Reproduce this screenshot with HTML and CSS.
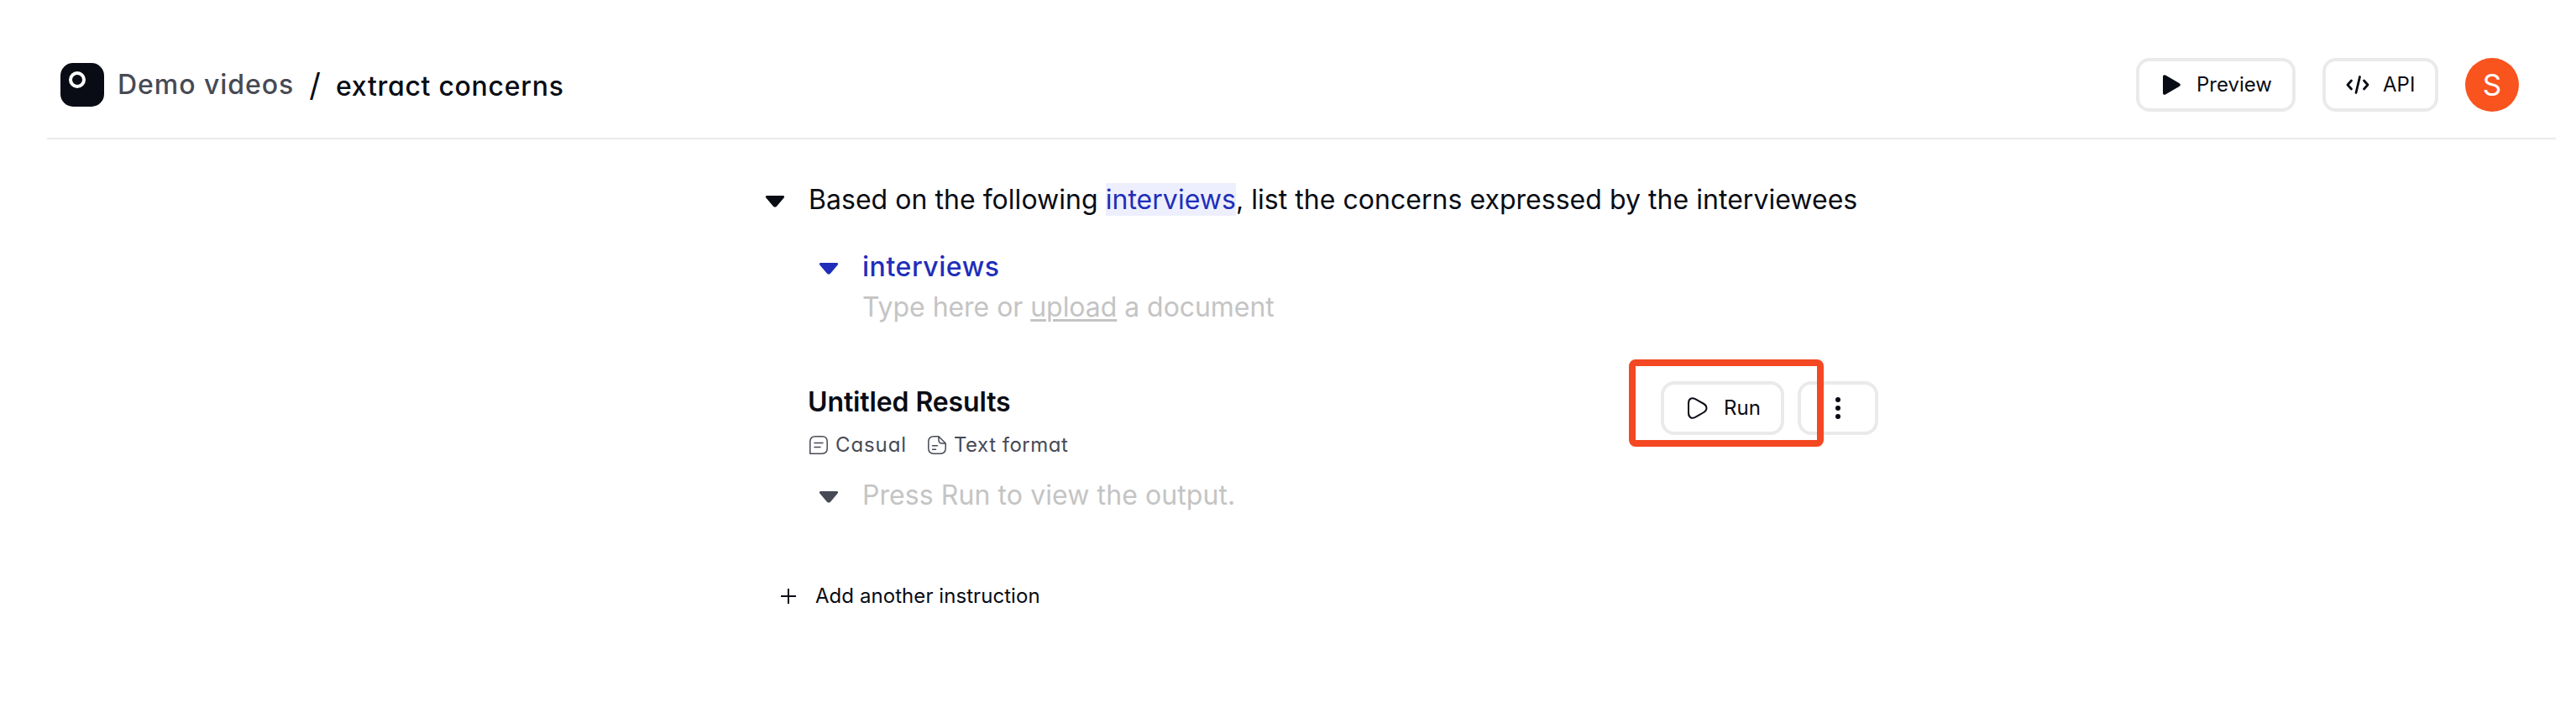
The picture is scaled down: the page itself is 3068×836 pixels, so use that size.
FILE: index.html
```html
<!DOCTYPE html>
<html lang="en">
<head>
<meta charset="utf-8">
<title>extract concerns</title>
<link rel="stylesheet" href="styles.css">
</head>
<body>
<header class="topbar">
  <nav class="crumbs">
    <span class="logo"><span class="logo-ring"></span></span>
    <span class="crumb-parent">Demo videos</span>
    <span class="crumb-sep">/</span>
    <span class="crumb-current">extract concerns</span>
  </nav>
  <div class="actions">
    <button class="btn btn-preview">
      <svg class="icon-play" width="24" height="26" viewBox="0 0 24 26"><path d="M2 3.500C2 1.200 3.500.6 5.500 1.700L21.400 11c2 1.200 2 2.800 0 4L5.500 24.300C3.500 25.400 2 24.800 2 22.500z" fill="#090c14"/></svg>
      <span>Preview</span>
    </button>
    <button class="btn btn-api">
      <svg class="icon-code" width="28" height="24" viewBox="0 0 28 24" fill="none" stroke="#090c14" stroke-width="2.800" stroke-linecap="round" stroke-linejoin="round"><path d="M6.500 7 2 12l4.500 5M21.500 7l4.500 5-4.500 5M16.500 2.500 12 21.500"/></svg>
      <span>API</span>
    </button>
    <span class="avatar">S</span>
  </div>
</header>
<main class="editor">
  <section class="row instruction">
    <svg class="caret" width="24" height="16" viewBox="0 0 24 16"><path d="M2.500 1h19c1.800 0 2.200 1.500 1 2.800l-8.300 9.600c-1.400 1.600-3 1.600-4.400 0L1.500 3.800C.3 2.500.7 1 2.500 1z" fill="#090c14"/></svg>
    <p class="prompt">Based on the following <span class="tag">interviews</span>, list the concerns expressed by the interviewees</p>
  </section>
  <section class="row variable">
    <svg class="caret" width="24" height="16" viewBox="0 0 24 16"><path d="M2.500 1h19c1.800 0 2.200 1.500 1 2.800l-8.300 9.600c-1.400 1.600-3 1.600-4.400 0L1.500 3.800C.3 2.500.7 1 2.500 1z" fill="#1f2eba"/></svg>
    <div>
      <h2 class="var-name">interviews</h2>
      <p class="placeholder var-input">Type here or <span class="upload">upload</span> a document</p>
    </div>
  </section>
  <section class="results">
    <div class="results-head">
      <div>
        <h2 class="results-title">Untitled Results</h2>
        <div class="options">
          <span class="option casual">
            <svg width="22" height="22" viewBox="0 0 22 22" fill="none" stroke="#474a54" stroke-width="1.500" stroke-linecap="round" stroke-linejoin="round"><path d="M.8 21.200V7C.8 3 3 .8 7 .8h8c4 0 6.200 2.200 6.200 6.200v8c0 4-2.200 6.200-6.200 6.200zM6 8.500h10M6 13.500h7"/></svg>
            <span>Casual</span>
          </span>
          <span class="option format">
            <svg width="22" height="22" viewBox="0 0 22 22" fill="none" stroke="#474a54" stroke-width="1.500" stroke-linecap="round" stroke-linejoin="round"><path d="M21.200 9v6c0 4-2.200 6.200-6.200 6.200H7c-4 0-6.200-2.200-6.200-6.200V7C.8 3 3 .8 7 .8h6zM13 .8V5c0 3 1 4 4 4h4.200L13 .8M5.500 11.800h6M5.500 16.200h4"/></svg>
            <span>Text format</span>
          </span>
        </div>
      </div>
      <div class="run-group">
        <button class="btn btn-run">
          <svg width="26" height="28" viewBox="0 0 26 28" fill="none" stroke="#090c14" stroke-width="2" stroke-linejoin="round"><path d="M2 14V8.500C2 3 5.500.8 10 3.200l4.800 2.700 4.700 2.600c5.300 3 5.300 8 0 11l-4.700 2.600L10 24.800C5.500 27.200 2 25 2 19.500z"/></svg>
          <span>Run</span>
        </button>
        <button class="btn btn-more" aria-label="More">
          <svg width="6" height="26" viewBox="0 0 6 26" fill="#090c14"><circle cx="3" cy="3" r="3"/><circle cx="3" cy="13" r="3"/><circle cx="3" cy="23" r="3"/></svg>
        </button>
        <span class="highlight"></span>
      </div>
    </div>
    <div class="row output">
      <svg class="caret" width="24" height="16" viewBox="0 0 24 16"><path d="M2.500 1h19c1.800 0 2.200 1.500 1 2.800l-8.300 9.600c-1.400 1.600-3 1.600-4.400 0L1.500 3.800C.3 2.500.7 1 2.500 1z" fill="#474a54"/></svg>
      <p class="placeholder">Press Run to view the output.</p>
    </div>
  </section>
  <div class="add">
    <svg width="18" height="18" viewBox="0 0 18 18" stroke="#090c14" stroke-width="2"><path d="M9 0v18M0 9h18"/></svg>
    <span>Add another instruction</span>
  </div>
</main>
</body>
</html>
```
FILE: styles.css
```css
* { box-sizing: border-box; margin: 0; padding: 0; }
body {
  width: 3068px;
  height: 836px;
  overflow: hidden;
  background: #fff;
  color: #090c14;
  font: 400 32px/40px Inter, "Liberation Sans", sans-serif;
}
svg { display: block; flex: none; }
p, h2, span { white-space: nowrap; }

.topbar {
  display: flex;
  justify-content: space-between;
  height: 166px;
  margin: 0 24px 0 56px;
  padding: 69px 44px 31px 16px;
  border-bottom: 2px solid #eaeaea;
}
.crumbs, .actions { display: flex; align-items: center; height: 64px; }
.crumbs { font-size: 32px; font-weight: 500; font-feature-settings: "cv11"; }
.logo { width: 52px; height: 52px; padding: 10px; border-radius: 15px; background: #090c14; }
.logo-ring { display: block; width: 20px; height: 20px; border: 4px solid #fff; border-radius: 50%; }
.crumb-parent { width: 210px; margin-left: 16px; color: #474a54; letter-spacing: 0.95px; }
.crumb-sep { width: 50px; text-align: center; font-size: 38px; font-weight: 400; }
.crumb-current { padding-top: 4px; letter-spacing: 0.7px; }

.btn {
  display: flex;
  align-items: center;
  height: 64px;
  border: 4px solid #eaeaea;
  border-radius: 16px;
  background: #fff;
  color: #090c14;
  font: 400 24px/30px Inter, "Liberation Sans", sans-serif;
}
.btn-preview { width: 190px; padding-left: 26px; gap: 18px; }
.btn-api { width: 138px; margin-left: 32px; padding-left: 24px; gap: 16px; }
.avatar {
  width: 64px;
  height: 64px;
  margin-left: 32px;
  border-radius: 50%;
  background: #f9531e;
  color: #fff;
  font: 400 35px/64px Inter, "Liberation Sans", sans-serif;
  text-align: center;
}

.editor { width: 1325px; margin-left: 912px; padding-top: 52px; }
.row { display: flex; align-items: flex-start; }
.caret { margin-top: 14px; }
.instruction .caret { margin-left: -1px; }
.prompt { margin-left: 28px; letter-spacing: 0.035px; }
.tag { background: #eeeffe; color: #1f2eba; }
.variable { margin: 40px 0 0 63px; gap: 28px; }
.var-name { color: #1f2eba; font-size: 32px; font-weight: 500; letter-spacing: 0.55px; }
.placeholder { color: #c4c4c4; }
.var-input { margin-top: 8px; letter-spacing: -0.05px; }
.upload { text-decoration: underline; text-decoration-thickness: 3px; text-underline-offset: 3px; }

.results { margin: 69px 0 0 52px; }
.results-head { display: flex; justify-content: space-between; }
.results-title { margin: 4px 0 0 -2px; font-size: 32px; font-weight: 600; letter-spacing: -0.12px; }
.options {
  display: flex;
  gap: 26px;
  margin-top: 19px;
  color: #474a54;
  font-size: 24px;
  line-height: 24px;
  font-feature-settings: "cv11";
}
.option { display: flex; align-items: center; gap: 9px; }
.casual { width: 115px; letter-spacing: 0.9px; }
.format { letter-spacing: 0.5px; }
.run-group { position: relative; display: flex; gap: 16px; height: 64px; margin-top: -1px; }
.btn-run { width: 147px; padding-left: 27px; gap: 18px; }
.btn-more { width: 96px; padding-left: 41px; }
.highlight {
  position: absolute;
  left: -38px;
  top: -26px;
  width: 232px;
  height: 104px;
  border: 8px solid #f44822;
  border-radius: 8px;
}
.output { margin: 28px 0 0 11px; gap: 28px; }
.output .placeholder { letter-spacing: 0.08px; }

.add {
  display: flex;
  align-items: center;
  gap: 23px;
  margin: 88px 0 0 18px;
  font-size: 24px;
  line-height: 24px;
  letter-spacing: 0.06px;
}
```
